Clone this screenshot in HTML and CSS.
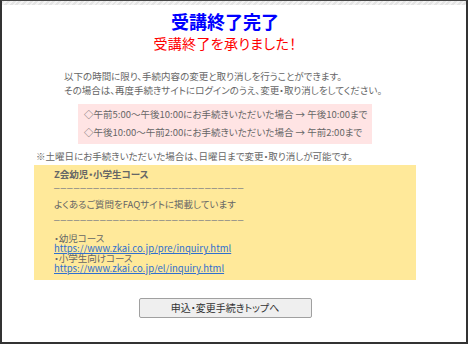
FILE: index.html
```html
<!DOCTYPE html>
<html>
<head>
    <meta charset="utf-8">
    <title>受講終了完了</title>
    <link rel="stylesheet" href="styles.css">
</head>
<body>
    <div class="window">
        <div class="topbar"></div>
        <div class="container">
            <h1 class="title">受講終了完了</h1>
            <p class="subtitle">受講終了を承りました！</p>

            <p class="notice">以下の時間に限り、手続内容の変更と取り消しを行うことができます。<br>その場合は、再度手続きサイトにログインのうえ、変更・取り消しをしてください。</p>

            <div class="times">
                <p>◇午前5:00～午後10:00にお手続きいただいた場合 → 午後10:00まで</p>
                <p>◇午後10:00～午前2:00にお手続きいただいた場合 → 午前2:00まで</p>
            </div>

            <p class="note">※土曜日にお手続きいただいた場合は、日曜日まで変更・取り消しが可能です。</p>

            <div class="faq">
                <p class="faq-title">Z会幼児・小学生コース</p>
                <p class="rule">–––––––––––––––––––––––––––––</p>
                <p class="faq-text">よくあるご質問をFAQサイトに掲載しています</p>
                <p class="rule">–––––––––––––––––––––––––––––</p>
                <div class="links">
                    <p>・幼児コース</p>
                    <a href="#">https://www.zkai.co.jp/pre/inquiry.html</a>
                    <p>・小学生向けコース</p>
                    <a href="#">https://www.zkai.co.jp/el/inquiry.html</a>
                </div>
            </div>

            <div class="actions">
                <button type="button">申込・変更手続きトップへ</button>
            </div>
        </div>
    </div>
</body>
</html>
```

FILE: styles.css
```css
body {
    margin: 0;
    padding: 0;
    background-color: #fff;
    font-family: "Noto Sans CJK JP", "Noto Sans", sans-serif;
    font-feature-settings: "palt";
    color: #666;
}

p {
    margin: 0;
}

.window {
    width: 464px;
    height: 341px;
    border-top: 1px solid #444;
    border-left: 2px solid #333;
    border-right: 2px solid #333;
    border-bottom: 2px solid #333;
    background-color: #fff;
    overflow: hidden;
}

.topbar {
    height: 4px;
    background: repeating-linear-gradient(135deg, #e4e4e4 0 2px, #f2f2f2 2px 4px);
}

.container {
    width: 382px;
    margin-left: 32px;
}

.title {
    margin: 6px 0 0 0;
    font-size: 18px;
    line-height: 20px;
    color: #0000ff;
    text-align: center;
    font-weight: bold;
}

.subtitle {
    margin-top: 3px;
    font-size: 14px;
    line-height: 18px;
    color: #ff0000;
    text-align: center;
    letter-spacing: 0.3px;
}

.notice {
    margin: 17px 0 0 30px;
    font-size: 9.5px;
    line-height: 14px;
    white-space: nowrap;
}

.times {
    width: 282px;
    margin: 7px 0 0 44px;
    padding: 1px 6px 3px 6px;
    background-color: #ffe4e4;
    font-size: 9.5px;
    line-height: 18px;
    white-space: nowrap;
}

.note {
    margin: 5px 0 0 2px;
    font-size: 9.5px;
    line-height: 14px;
    white-space: nowrap;
}

.faq {
    margin-top: 2px;
    padding: 2px 20px 7px 20px;
    background-color: #ffe99a;
    font-size: 9.5px;
}

.faq-title {
    font-weight: bold;
    line-height: 14px;
}

.rule {
    font-family: "Liberation Sans", sans-serif;
    font-size: 10px;
    line-height: 14px;
    letter-spacing: 1px;
    color: #888;
    white-space: nowrap;
}

.faq-text {
    line-height: 16px;
    margin: 1px 0;
}

.links {
    margin-top: 6px;
    line-height: 10px;
}

.links a {
    display: block;
    color: #2f6fcf;
    text-decoration: underline;
}

.actions {
    margin-top: 13px;
    text-align: center;
}

.actions button {
    width: 173px;
    height: 20px;
    padding: 0;
    font-family: "Noto Sans CJK JP", sans-serif;
    font-feature-settings: "palt";
    font-size: 10px;
    color: #333;
    background-color: #efefef;
    border: 1px solid #a0a0a0;
    border-radius: 2px;
    cursor: pointer;
}
```
